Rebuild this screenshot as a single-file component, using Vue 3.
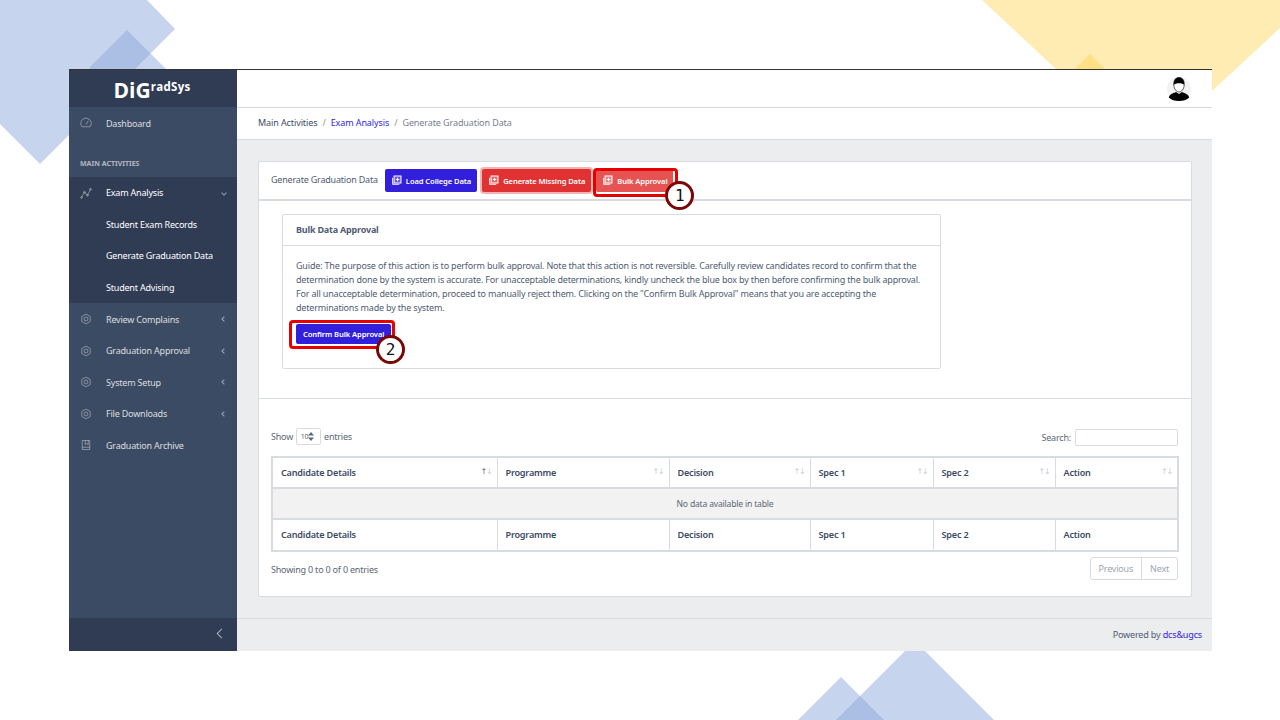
<template>
  <div class="slide">
    <!-- slide background shapes -->
    <svg class="deco" width="1280" height="720" viewBox="0 0 1280 720">
      <polygon points="0,0 147,0 175,29 40,164 0,124" fill="#8faadc" opacity="0.5" />
      <polygon points="127,30 166,69 150,85 90,85 90,67" fill="#8faadc" opacity="0.5" />
      <polygon points="982,0 1280,0 1280,28 1212,91 1100,110" fill="#ffd966" opacity="0.5" />
      <polygon points="1090,54 1110,74 1070,74" fill="#ffd966" opacity="0.6" />
      <polygon points="915,641 994,720 836,720" fill="#8faadc" opacity="0.5" />
      <polygon points="841,677 884,720 798,720" fill="#8faadc" opacity="0.5" />
    </svg>

    <div class="frame">
      <aside class="sidebar">
        <div class="brand"><span class="brand-big">DiG</span><span class="brand-small">radSys</span></div>
        <nav class="nav">
          <a class="nav-item">
            <svg class="nav-icon" viewBox="0 0 16 16"><path d="M2.6 13A7 7 0 1 1 13.4 13Z" /><path d="M8 10 11 5" /></svg>
            Dashboard
          </a>
          <div class="nav-title">MAIN ACTIVITIES</div>
          <div class="nav-group">
            <a class="nav-item open">
              <svg class="nav-icon" viewBox="0 0 16 16"><path d="M2 14 6 7 10 11 14 3" /><circle cx="2" cy="14" r="1.2" /><circle cx="6" cy="7" r="1.2" /><circle cx="10" cy="11" r="1.2" /><circle cx="14" cy="3" r="1.2" /></svg>
              Exam Analysis
              <span class="caret down"></span>
            </a>
            <a v-for="s in subItems" :key="s" class="nav-item sub">{{ s }}</a>
          </div>
          <a v-for="m in menuItems" :key="m" class="nav-item">
            <svg class="nav-icon" viewBox="0 0 16 16"><path d="M8 1.5 13.6 4.7V11.3L8 14.5 2.4 11.3V4.7Z" /><circle cx="8" cy="8" r="2.6" /></svg>
            {{ m }}
            <span class="caret"></span>
          </a>
          <a class="nav-item">
            <svg class="nav-icon" viewBox="0 0 16 16"><path d="M3 2H13V14H3Z" /><path d="M3 11H13M7 2V7.5L9 6 11 7.5V2" /></svg>
            Graduation Archive
          </a>
        </nav>
        <div class="collapse-bar"><span class="collapse-chevron"></span></div>
      </aside>

      <div class="main">
        <header class="topbar">
          <svg class="avatar" width="24" height="24" viewBox="0 0 24 24">
            <circle cx="12" cy="12" r="12" fill="#f2f2f2" />
            <path d="M1.8 20.5C2.5 17 7 16 9 15L12 17 15 15C17 16 21.5 17 22.2 20.5 20 23 16 24 12 24 8 24 4 23 1.8 20.5Z" fill="#000" />
            <path d="M6.8 8C6.5 2.5 9 .6 12 .6S17.5 2.5 17.2 8C17 12 14.5 15 12 15S7 12 6.8 8Z" fill="#fff" stroke="#333" stroke-width=".8" />
            <path d="M6.8 8C6.5 2.5 9 .6 12 .6S17.5 2.5 17.2 8C16 5.5 8 5.5 6.8 8Z" fill="#000" />
          </svg>
        </header>
        <div class="breadcrumb">
          <span>Main Activities</span><i>/</i><a>Exam Analysis</a><i>/</i><span class="crumb-current">Generate Graduation Data</span>
        </div>

        <div class="content">
          <div class="card">
            <div class="tabs">
              <span class="tabs-label">Generate Graduation Data</span>
              <button class="btn btn-blue"><svg class="btn-icon" viewBox="0 0 16 16"><use href="#lib-add" /></svg>Load College Data</button>
              <button class="btn btn-red"><svg class="btn-icon" viewBox="0 0 16 16"><use href="#lib-add" /></svg>Generate Missing Data</button>
              <div class="mark-wrap">
                <button class="btn btn-light-red"><svg class="btn-icon" viewBox="0 0 16 16"><use href="#lib-add" /></svg>Bulk Approval</button>
                <span class="mark mark-1"></span>
                <span class="num num-1">1</span>
              </div>
            </div>

            <div class="panel">
              <div class="inner-card">
                <div class="inner-head">Bulk Data Approval</div>
                <div class="inner-body">
                  <p>Guide: The purpose of this action is to perform bulk approval. Note that this action is not reversible. Carefully review candidates record to confirm that the determination done by the system is accurate. For unacceptable determinations, kindly uncheck the blue box by then before confirming the bulk approval. For all unacceptable determination, proceed to manually reject them. Clicking on the "Confirm Bulk Approval" means that you are accepting the determinations made by the system.</p>
                  <div class="mark-wrap confirm-wrap">
                    <button class="btn btn-blue btn-confirm">Confirm Bulk Approval</button>
                    <span class="mark mark-2"></span>
                    <span class="num num-2">2</span>
                  </div>
                </div>
              </div>
            </div>

            <div class="table-area">
              <div class="table-tools">
                <div class="show">
                  Show
                  <span class="select">10<svg class="spin" width="6" height="9" viewBox="0 0 6 9"><path d="M3 0 6 3.5H0ZM3 9 0 5.5H6Z" /></svg></span>
                  entries
                </div>
                <div class="search">Search: <span class="search-box"></span></div>
              </div>
              <table>
                <thead>
                  <tr>
                    <th v-for="(c, i) in columns" :key="c.name" :style="{ width: c.width + 'px' }">
                      {{ c.name }}
                      <span class="sort"><b :class="{ on: i === 0 }">↑</b><b>↓</b></span>
                    </th>
                  </tr>
                </thead>
                <tbody>
                  <tr><td :colspan="columns.length">No data available in table</td></tr>
                </tbody>
                <tfoot>
                  <tr><th v-for="c in columns" :key="c.name">{{ c.name }}</th></tr>
                </tfoot>
              </table>
              <div class="table-foot">
                <span>Showing 0 to 0 of 0 entries</span>
                <div class="pager"><span>Previous</span><span>Next</span></div>
              </div>
            </div>
          </div>
        </div>

        <footer class="footer">Powered by&nbsp;<a>dcs&amp;ugcs</a></footer>
      </div>
    </div>

    <svg width="0" height="0" class="defs">
      <symbol id="lib-add" viewBox="0 0 16 16">
        <path d="M4.5 1.5H14.5V11.5H4.5Z" fill="currentColor" fill-opacity="0.25" stroke="currentColor" stroke-width="1.5" />
        <path d="M9.5 4V9M7 6.5H12" stroke="currentColor" stroke-width="1.5" />
        <path d="M2.5 4V13.5H12" fill="none" stroke="currentColor" stroke-width="1.5" />
      </symbol>
    </svg>
  </div>
</template>

<script setup>
const subItems = ['Student Exam Records', 'Generate Graduation Data', 'Student Advising']
const menuItems = ['Review Complains', 'Graduation Approval', 'System Setup', 'File Downloads']
const columns = [
  { name: 'Candidate Details', width: 225 },
  { name: 'Programme', width: 172 },
  { name: 'Decision', width: 141 },
  { name: 'Spec 1', width: 123 },
  { name: 'Spec 2', width: 122 },
  { name: 'Action', width: 123 },
]
</script>

<style>
html, body { margin: 0; background: #fff; }
</style>

<style scoped>
.slide {
  position: relative;
  width: 1280px;
  height: 720px;
  overflow: hidden;
  background: #fff;
  font-family: "Noto Sans", "Open Sans", sans-serif;
  font-size: 9px;
  letter-spacing: -0.2px;
  color: #5c6873;
  padding: 69px 68px 69px 69px;
  box-sizing: border-box;
}
.deco { position: absolute; left: 0; top: 0; }
.defs { position: absolute; }

.frame {
  position: relative;
  display: flex;
  height: 582px;
  border-top: 1px solid #333;
  box-sizing: border-box;
}

/* sidebar */
.sidebar {
  width: 168px;
  flex-shrink: 0;
  background: #3c4b64;
  display: flex;
  flex-direction: column;
  color: #fff;
}
.brand {
  height: 37px;
  background: #303c54;
  display: flex;
  align-items: flex-start;
  justify-content: center;
  padding: 6px 2px 0 0;
  box-sizing: border-box;
  font-family: "Open Sans", sans-serif;
  font-weight: 700;
  letter-spacing: 0;
}
.brand-big { font-size: 21px; line-height: 28px; }
.brand-small { font-size: 11.5px; line-height: 16px; letter-spacing: 0.3px; margin-top: 3px; }
.nav { flex: 1; }
.nav-item {
  position: relative;
  display: flex;
  align-items: center;
  height: 31.6px;
  padding: 0.5px 0 0 11px;
  box-sizing: border-box;
  color: rgba(255,255,255,0.82);
  white-space: nowrap;
}
.nav-item.open { color: #fff; }
.nav-item.sub { padding-left: 37px; color: #fff; }
.nav-icon {
  width: 12px;
  height: 12px;
  margin-right: 14px;
  fill: none;
  stroke: rgba(255,255,255,0.42);
  stroke-width: 1.2;
}
.nav-title {
  height: 38px;
  padding: 20px 0 0 11px;
  box-sizing: border-box;
  font-size: 7px;
  font-weight: 700;
  letter-spacing: 0;
  color: rgba(255,255,255,0.6);
}
.nav-group { background: #303c54; }
.caret {
  position: absolute;
  right: 11px;
  top: 14px;
  width: 3px;
  height: 3px;
  border-left: 1px solid rgba(255,255,255,0.5);
  border-bottom: 1px solid rgba(255,255,255,0.5);
  transform: rotate(45deg);
}
.caret.down { transform: rotate(-45deg); }
.collapse-bar {
  height: 33px;
  background: #303c54;
  position: relative;
}
.collapse-chevron {
  position: absolute;
  left: 149px;
  top: 12px;
  width: 6px;
  height: 6px;
  border-left: 1.5px solid rgba(255,255,255,0.6);
  border-bottom: 1.5px solid rgba(255,255,255,0.6);
  transform: rotate(45deg);
}

/* main column */
.main {
  flex: 1;
  display: flex;
  flex-direction: column;
  background: #ebedef;
  min-width: 0;
}
.topbar {
  height: 37px;
  background: #fff;
  border-bottom: 1px solid #d8dbe0;
  display: flex;
  align-items: center;
  justify-content: flex-end;
  padding-right: 21px;
}
.breadcrumb {
  height: 32px;
  background: #fff;
  border-bottom: 1px solid #d8dbe0;
  display: flex;
  align-items: center;
  padding: 0 0 3px 21px;
  box-sizing: border-box;
  letter-spacing: -0.1px;
  color: #3c4b64;
}
.breadcrumb i { font-style: normal; margin: 0 5px; color: #8a93a2; }
.breadcrumb a { color: #321fdb; }
.crumb-current { color: #768192; }

.content { flex: 1; padding: 21px 20px 21px 21px; min-height: 0; }
.card {
  background: #fff;
  border: 1px solid #d8dbe0;
  border-radius: 2px;
  height: 436px;
  box-sizing: border-box;
}
.tabs {
  height: 39px;
  display: flex;
  align-items: flex-start;
  padding: 7px 0 0 12px;
  box-sizing: border-box;
  border-bottom: 2px solid #d8dbe0;
}
.tabs-label { margin-right: 7px; line-height: 21px; color: #4f5d73; }
.btn {
  display: inline-flex;
  align-items: center;
  height: 23px;
  border: 1px solid transparent;
  border-radius: 2px;
  padding: 0 5px;
  margin-right: 5px;
  color: #fff;
  font-family: inherit;
  font-size: 7.6px;
  letter-spacing: -0.1px;
  font-weight: 600;
  white-space: nowrap;
}
.btn-icon { width: 11px; height: 11px; margin-right: 4px; color: #fff; }
.btn-blue { background: #321fdb; }
.btn-red { background: #e03232; box-shadow: 0 0 0 2px #f4b4b4; }
.btn-light-red { background: #e55353; margin: 0; }

.mark-wrap { position: relative; display: inline-block; }
.mark {
  position: absolute;
  border: 3px solid #e60000;
  border-radius: 4px;
  pointer-events: none;
}
.mark-1 { left: -3px; right: -5px; top: -1px; bottom: -5px; }
.mark-2 { left: -7px; right: -4px; top: -4px; bottom: -5px; }
.num {
  position: absolute;
  box-sizing: border-box;
  width: 29px;
  height: 29px;
  border: 3px solid #7a0606;
  border-radius: 50%;
  background: #fff;
  color: #111;
  font-family: "DejaVu Sans Mono", monospace;
  font-size: 16px;
  line-height: 23px;
  text-align: center;
}
.num-1 { left: 69px; top: 12px; }
.num-2 { left: 80px; top: 11px; }

.panel {
  height: 198px;
  padding: 13px 0 0 23px;
  box-sizing: border-box;
  border-bottom: 1px solid #d8dbe0;
}
.inner-card {
  width: 659px;
  height: 155px;
  box-sizing: border-box;
  border: 1px solid #d8dbe0;
  border-radius: 2px;
}
.inner-head {
  height: 30px;
  line-height: 29px;
  padding-left: 13px;
  border-bottom: 1px solid #d8dbe0;
  font-weight: 700;
  color: #4f5d73;
}
.inner-body { padding: 12.5px 13px 0 13px; }
.inner-body p {
  margin: 0 0 8.5px;
  line-height: 14.2px;
  letter-spacing: -0.18px;
  color: #4f5d73;
}
.confirm-wrap { display: block; width: fit-content; }
.btn-confirm { height: 20px; margin: 0; padding: 0 6px; background: #321fdb; }

.table-area { padding: 28px 13px 0 12px; }
.table-tools {
  display: flex;
  justify-content: space-between;
  align-items: center;
  height: 20px;
  margin-bottom: 9px;
}
.select {
  position: relative;
  display: inline-block;
  width: 25px;
  height: 17px;
  line-height: 16px;
  margin: 0 2px;
  padding-right: 8px;
  border: 1px solid #d8dbe0;
  border-radius: 2px;
  text-align: center;
  box-sizing: border-box;
  font-size: 7px;
}
.spin {
  position: absolute;
  left: 11px;
  top: 3px;
  fill: #5c6873;
}
.show { display: flex; align-items: center; gap: 1px; margin-top: -2px; }
.search { display: flex; align-items: center; gap: 4px; }
.search-box {
  display: inline-block;
  width: 103px;
  height: 17px;
  border: 1px solid #d8dbe0;
  border-radius: 2px;
  box-sizing: border-box;
}
table {
  width: 906px;
  table-layout: fixed;
  border-collapse: collapse;
  border: 2px solid #d8dbe0;
}
th, td {
  height: 31px;
  box-sizing: border-box;
  border: 1px solid #d8dbe0;
  padding: 0 8px;
  text-align: left;
  position: relative;
}
th { color: #3c4b64; font-weight: 600; font-size: 9.1px; }
thead tr { border-bottom: 2px solid #d8dbe0; }
tfoot th { border-top: 2px solid #d8dbe0; height: 32px; padding-bottom: 2px; }
td { background: #f2f2f3; text-align: center; font-size: 8.6px; }
.sort {
  position: absolute;
  right: 4px;
  top: 9px;
  font-size: 8px;
  font-family: "DejaVu Sans", sans-serif;
  line-height: 10px;
}
.sort b { font-weight: 400; color: #c8ccd2; margin-left: -1px; }
.sort b.on { color: #5c6873; }
.table-foot {
  display: flex;
  justify-content: space-between;
  align-items: flex-start;
  margin-top: 5px;
}
.table-foot > span { margin-top: 6px; }
.pager {
  display: flex;
  height: 23px;
  border: 1px solid #d8dbe0;
  border-radius: 3px;
  box-sizing: border-box;
  color: #9da5b1;
}
.pager span { display: flex; align-items: center; padding: 0 8px; }
.pager span + span { border-left: 1px solid #d8dbe0; }

.footer {
  height: 33px;
  box-sizing: border-box;
  border-top: 1px solid #d8dbe0;
  display: flex;
  align-items: center;
  justify-content: flex-end;
  padding: 0 10px 2px 0;
  font-size: 9.1px;
  color: #4f5d73;
}
.footer a { color: #321fdb; }
</style>
